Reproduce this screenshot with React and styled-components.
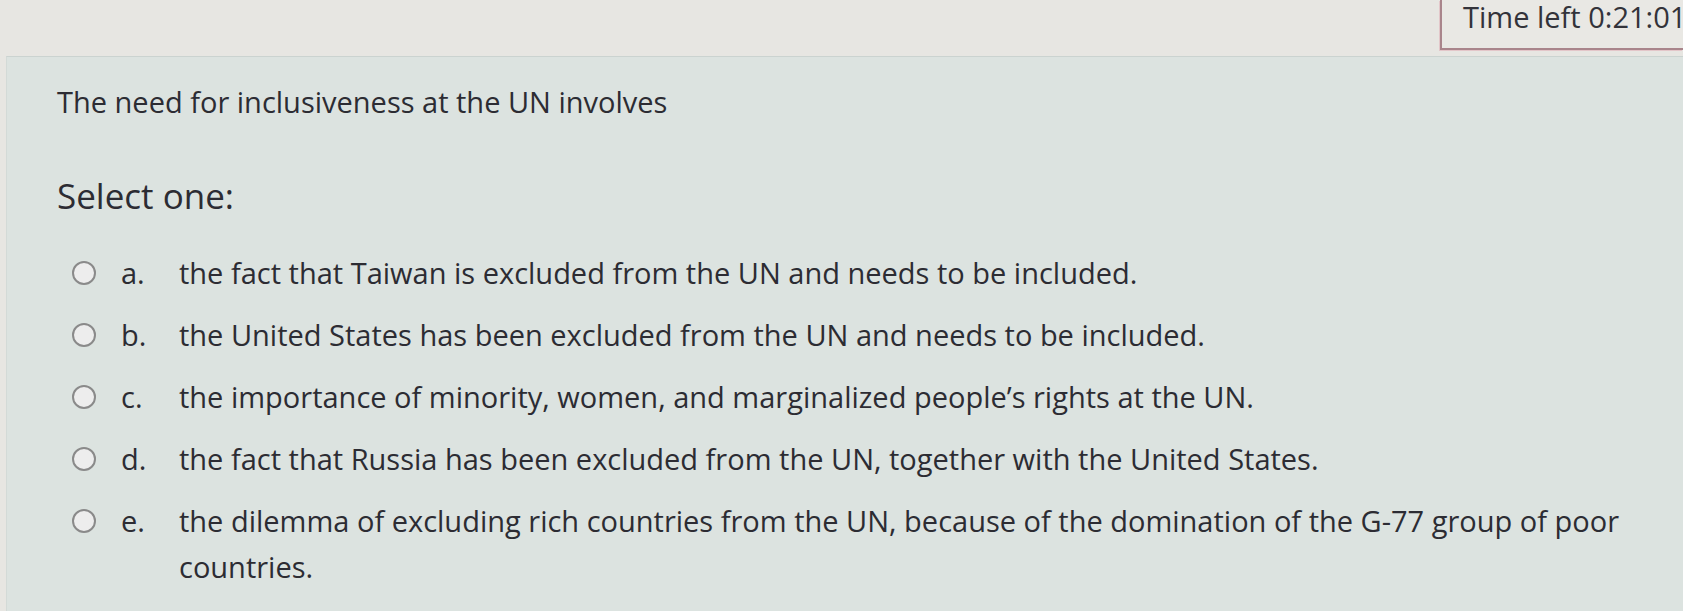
import React from "react";
import styled, { createGlobalStyle } from "styled-components";

const Global = createGlobalStyle`
  html, body {
    margin: 0;
    padding: 0;
    background: #e7e6e2;
    overflow: hidden;
  }
  body {
    font-family: "Open Sans", "Noto Sans", "Liberation Sans", sans-serif;
    color: #2c2c33;
  }
`;

const Page = styled.div`
  width: 1683px;
  height: 611px;
  display: flex;
  flex-direction: column;
  background: #e7e6e2;
`;

const Header = styled.div`
  display: grid;
  grid-template-columns: 1fr 243px;
  height: 50px;
`;

const TimerBox = styled.div`
  grid-column: 2;
  box-sizing: border-box;
  height: 50px;
  padding-left: 21px;
  border-left: 2px solid #a9858b;
  border-bottom: 2px solid #a9858b;
  box-shadow: -1px 1px 0 #e3c6c9;
  background: #e9e8e4;
  font-size: 29px;
  line-height: 34px;
  white-space: nowrap;
  color: #33333a;
`;

const Card = styled.div`
  flex: 1;
  margin: 6px 0 0 6px;
  padding: 25px 40px 0 50px;
  background: #dce3e0;
  border-top: 1px solid #cbd3d0;
  border-left: 1px solid #d3dad7;
`;

const Question = styled.div`
  font-size: 29px;
  line-height: 40px;
`;

const Prompt = styled.div`
  margin-top: 51px;
  font-size: 35px;
  line-height: 46px;
`;

const Options = styled.div`
  margin-top: 31px;
  display: flex;
  flex-direction: column;
  gap: 16px;
`;

const Row = styled.label`
  display: flex;
  align-items: flex-start;
  font-size: 29px;
  line-height: 46px;
`;

const Radio = styled.span`
  flex: none;
  box-sizing: border-box;
  width: 24px;
  height: 24px;
  margin: 11px 0 0 15px;
  border-radius: 50%;
  border: 2px solid #8a8a8a;
  background: #ededed;
`;

const Letter = styled.span`
  flex: none;
  width: 58px;
  margin-left: 25px;
`;

const Text = styled.span`
  flex: 1;
`;

const options = [
  ["a.", "the fact that Taiwan is excluded from the UN and needs to be included."],
  ["b.", "the United States has been excluded from the UN and needs to be included."],
  ["c.", "the importance of minority, women, and marginalized people\u2019s rights at the UN."],
  ["d.", "the fact that Russia has been excluded from the UN, together with the United States."],
  ["e.", "the dilemma of excluding rich countries from the UN, because of the domination of the G-77 group of poor countries."],
];

export default function App() {
  return (
    <Page>
      <Global />
      <Header>
        <TimerBox>Time left 0:21:01</TimerBox>
      </Header>
      <Card>
        <Question>The need for inclusiveness at the UN involves</Question>
        <Prompt>Select one:</Prompt>
        <Options>
          {options.map(([l, t]) => (
            <Row key={l}>
              <Radio />
              <Letter>{l}</Letter>
              <Text>{t}</Text>
            </Row>
          ))}
        </Options>
      </Card>
    </Page>
  );
}
